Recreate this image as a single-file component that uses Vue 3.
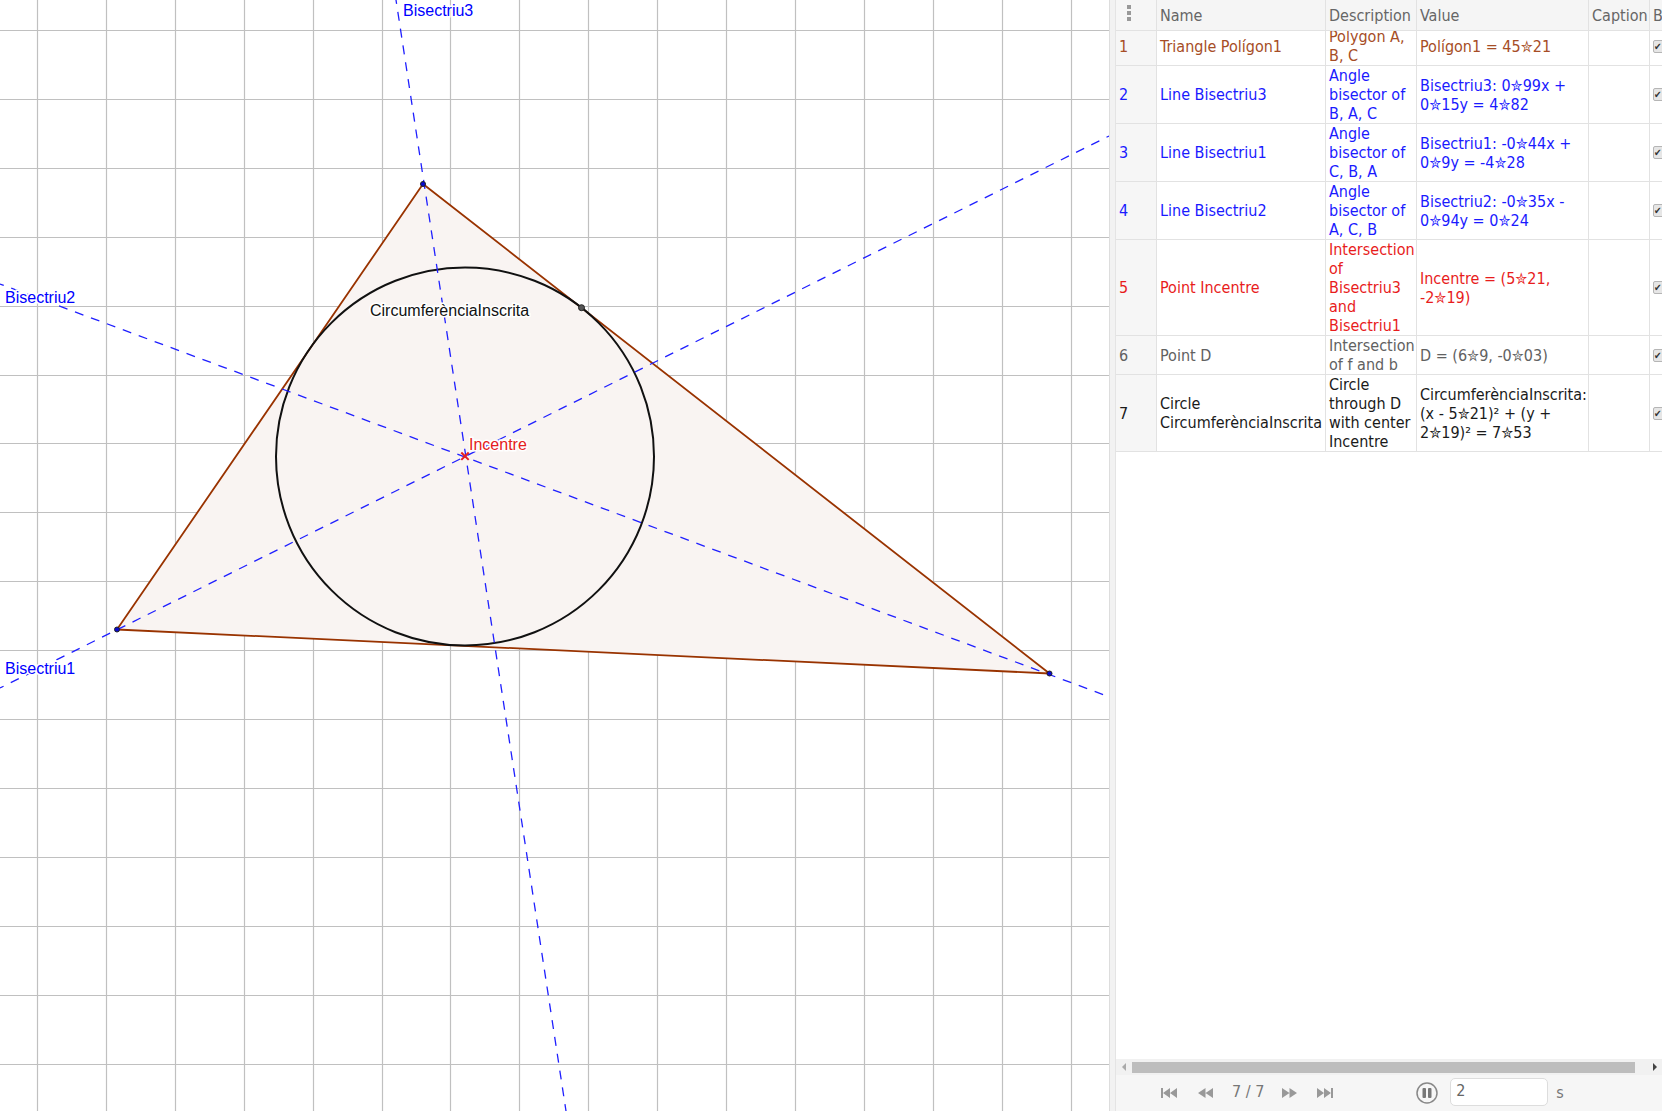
<template>
  <div class="app">
    <div class="canvas">
      <svg class="plot" width="1109" height="1111" viewBox="0 0 1109 1111">
        <line v-for="x in gridX" :key="'x' + x" :x1="x" :x2="x" y1="0" y2="1111" class="grid" />
        <line v-for="y in gridY" :key="'y' + y" :y1="y" :y2="y" x1="0" x2="1109" class="grid" />

        <polygon points="117,629.5 423,184 1049.5,673.5" class="tri" />
        <circle cx="465" cy="456.5" r="189" class="circ" />

        <line x1="0" y1="688" x2="1109" y2="136" class="bis" />
        <line x1="396" y1="0" x2="566" y2="1111" class="bis" />
        <line x1="0" y1="284" x2="1107" y2="696" class="bis" />

        <path d="M461.300 452.500 L468.700 459.900 M468.700 452.500 L461.300 459.900" class="cross" />
        <circle cx="117" cy="629.500" r="2.500" class="pt" />
        <circle cx="423" cy="184" r="2.500" class="pt" />
        <circle cx="1049.500" cy="673.500" r="2.500" class="pt" />
        <circle cx="581.500" cy="307.700" r="3" class="pt-d" />

        <text x="403" y="16" class="lbl blue halo">Bisectriu3</text>
        <text x="5" y="303" class="lbl blue halo">Bisectriu2</text>
        <text x="5" y="674" class="lbl blue halo">Bisectriu1</text>
        <text x="469" y="450" class="lbl red halo">Incentre</text>
        <text x="370" y="316" class="lbl halo">CircumferènciaInscrita</text>
      </svg>
    </div>
    <div class="gutter"></div>

    <div class="side">
      <div class="table">
        <div class="row head">
          <div class="cell idx"><span class="dots"><i></i><i></i><i></i></span></div>
          <div class="cell">Name</div>
          <div class="cell">Description</div>
          <div class="cell">Value</div>
          <div class="cell">Caption</div>
          <div class="cell">B</div>
        </div>
        <div class="body">
          <div v-for="r in rows" :key="r.id" class="row" :class="r.tone">
            <div class="cell idx">{{ r.id }}</div>
            <div class="cell"><div>{{ r.name }}</div></div>
            <div class="cell"><div>{{ r.desc }}</div></div>
            <div class="cell"><div>{{ r.value }}</div></div>
            <div class="cell"></div>
            <div class="cell"><span class="check">✔</span></div>
          </div>
        </div>
      </div>

      <div class="scrollbar">
        <span class="arrow left"></span>
        <div class="thumb"></div>
        <span class="arrow right"></span>
      </div>

      <div class="player">
        <svg class="ic first" width="16" height="10" viewBox="0 0 16 10"><path d="M0 0h2v10H0zM2 5l7-5v10zM9 5l7-5v10z" /></svg>
        <svg class="ic prev" width="15" height="10" viewBox="0 0 15 10"><path d="M0 5l7.500-5v10zM7.500 5l7.500-5v10z" /></svg>
        <span class="count">7 / 7</span>
        <svg class="ic next" width="15" height="10" viewBox="0 0 15 10"><path d="M0 0l7.500 5L0 10zM7.500 0L15 5l-7.500 5z" /></svg>
        <svg class="ic last" width="16" height="10" viewBox="0 0 16 10"><path d="M0 0l7 5-7 5zM7 0l7 5-7 5zM14 0h2v10h-2z" /></svg>
        <svg class="pause" width="22" height="22" viewBox="0 0 22 22">
          <circle cx="11" cy="11" r="10" fill="none" stroke="#888" stroke-width="1.500" />
          <rect x="6.500" y="6" width="3.500" height="10" rx="1" fill="#777" />
          <rect x="12" y="6" width="3.500" height="10" rx="1" fill="#777" />
        </svg>
        <input class="speed" value="2" />
        <span class="unit">s</span>
      </div>
    </div>
  </div>
</template>

<script setup>
const gridX = Array.from({ length: 16 }, (_, i) => Math.round(37 + i * 68.9) + 0.5);
const gridY = Array.from({ length: 16 }, (_, i) => Math.round(30 + i * 68.9) + 0.5);

const rows = [
  { id: 1, tone: 'brown', name: 'Triangle Polígon1', desc: 'Polygon A, B, C', value: 'Polígon1 = 45✮21' },
  { id: 2, tone: 'blue', name: 'Line Bisectriu3', desc: 'Angle bisector of B, A, C', value: 'Bisectriu3: 0✮99x + 0✮15y = 4✮82' },
  { id: 3, tone: 'blue', name: 'Line Bisectriu1', desc: 'Angle bisector of C, B, A', value: 'Bisectriu1: -0✮44x + 0✮9y = -4✮28' },
  { id: 4, tone: 'blue', name: 'Line Bisectriu2', desc: 'Angle bisector of A, C, B', value: 'Bisectriu2: -0✮35x - 0✮94y = 0✮24' },
  { id: 5, tone: 'red', name: 'Point Incentre', desc: 'Intersection of Bisectriu3 and Bisectriu1', value: 'Incentre = (5✮21, -2✮19)' },
  { id: 6, tone: 'grey', name: 'Point D', desc: 'Intersection of f and b', value: 'D = (6✮9, -0✮03)' },
  { id: 7, tone: 'black', name: 'Circle CircumferènciaInscrita', desc: 'Circle through D with center Incentre', value: 'CircumferènciaInscrita: (x - 5✮21)² + (y + 2✮19)² = 7✮53' },
];
</script>

<style>
html, body {
  margin: 0;
  background: #fff;
  overflow: hidden;
}
</style>

<style scoped>
.app {
  display: flex;
  width: 1662px;
  height: 1111px;
  overflow: hidden;
}

.canvas {
  width: 1109px;
  flex: none;
  background: #fff;
  border-right: 1px solid #ddd;
}

.plot {
  display: block;
}

.grid {
  stroke: #c0c0c0;
  stroke-width: 1.2;
}

.tri {
  fill: #f9f4f2;
  stroke: #993300;
  stroke-width: 1.8;
  stroke-linejoin: round;
}

.circ {
  fill: none;
  stroke: #111;
  stroke-width: 2;
}

.bis {
  stroke: #1f1fff;
  stroke-width: 1.3;
  stroke-dasharray: 9 8;
  stroke-dashoffset: 5;
}

.cross {
  stroke: #e52020;
  stroke-width: 2;
  fill: none;
}

.pt {
  fill: #0a0ad0;
  stroke: #222;
  stroke-width: 1;
}

.pt-d {
  fill: #555;
  stroke: #222;
  stroke-width: 1;
}

.lbl {
  font-family: "Liberation Sans", sans-serif;
  font-size: 16px;
  fill: #111;
}

.lbl.blue {
  fill: #0000ff;
}

.lbl.red {
  fill: #e52020;
}

.halo {
  paint-order: stroke;
  stroke: #fff;
  stroke-width: 3px;
}

.gutter {
  width: 5px;
  flex: none;
  background: #f2f2f2;
}

.side {
  flex: 1;
  min-width: 0;
  display: flex;
  flex-direction: column;
  border-left: 1px solid #e4e4e4;
  font-family: "DejaVu Sans", sans-serif;
  font-stretch: condensed;
  font-size: 16px;
  line-height: 19px;
}

.table {
  flex: 1;
  min-height: 0;
  overflow: hidden;
}

.row {
  display: grid;
  grid-template-columns: 41px 169px 91px 172px 61px 1fr;
  border-bottom: 1px solid #e2e2e2;
}

.head {
  position: relative;
  z-index: 1;
  height: 30px;
  background: #f5f5f5;
  color: #666;
}

/* first row is scrolled a little under the header */
.body {
  margin-top: -4px;
}

.cell {
  display: flex;
  align-items: center;
  padding: 0 2px 0 3px;
  border-right: 1px solid #e2e2e2;
  overflow: hidden;
}

.cell:last-child {
  border-right: none;
  padding-right: 0;
}

.cell > div {
  width: 100%;
}

.idx {
  background: #f6f6f6;
}

.brown {
  color: #a64d26;
}

.blue {
  color: #1a1aff;
}

.red {
  color: #e81c1c;
}

.grey {
  color: #616161;
}

.black {
  color: #1a1a1a;
}

.dots {
  display: flex;
  flex-direction: column;
  gap: 2px;
  margin: -4px 0 0 8px;
}

.dots i {
  display: block;
  width: 4px;
  height: 4px;
  background: #999;
}

.check {
  display: block;
  flex: none;
  box-sizing: border-box;
  width: 13px;
  height: 13px;
  border: 1px solid #b5b5b5;
  border-radius: 2px;
  background: #e6e6e6;
  color: #333;
  font-size: 10px;
  line-height: 11px;
  text-align: left;
}

.scrollbar {
  flex: none;
  height: 16px;
  box-sizing: border-box;
  background: #f1f1f1;
  display: flex;
  align-items: center;
  padding: 0 5px 0 6px;
}

.thumb {
  flex: 1;
  height: 11px;
  margin: 0 18px 0 6px;
  background: #bdbdbd;
}

.arrow {
  width: 0;
  height: 0;
  border-top: 4px solid transparent;
  border-bottom: 4px solid transparent;
}

.arrow.left {
  border-right: 4px solid #aaa;
}

.arrow.right {
  border-left: 4px solid #444;
}

.player {
  flex: none;
  height: 36px;
  background: #f6f6f6;
  display: flex;
  align-items: center;
  padding-left: 45px;
  color: #777;
}

.ic {
  flex: none;
  fill: #999;
}

.prev {
  margin-left: 21px;
}

.count {
  margin: -3px 0 0 19px;
}

.next {
  margin-left: 18px;
}

.last {
  margin-left: 20px;
}

.pause {
  flex: none;
  margin-left: 83px;
}

.speed {
  box-sizing: border-box;
  width: 98px;
  height: 28px;
  margin: -2px 0 0 12px;
  padding: 0 5px 3px;
  border: 1px solid #ddd;
  border-radius: 5px;
  background: #fff;
  color: #666;
  font: inherit;
  outline: none;
}

.unit {
  margin: -2px 0 0 8px;
}
</style>
